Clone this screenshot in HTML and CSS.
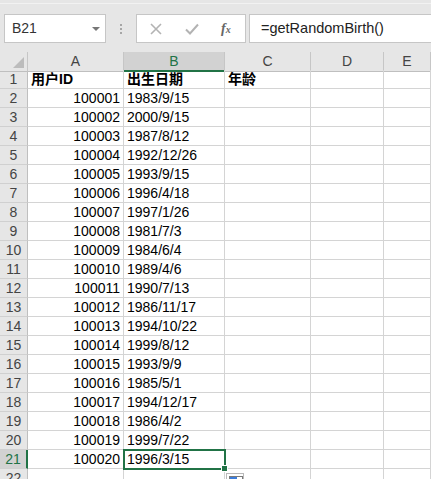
FILE: index.html
```html
<!DOCTYPE html>
<html lang="zh-CN">
<head>
    <meta charset="UTF-8">
    <meta name="viewport" content="width=device-width, initial-scale=1.0">
    <title>出生日期</title>
    <link rel="stylesheet" href="styles.css">
</head>
<body>
    <div class="toolbar">
        <div class="formula-bar">
            <div class="name-box">B21<span class="caret"></span></div>
            <div class="grip"><i></i><i></i><i></i></div>
            <div class="fn-box">
                <svg class="cancel" width="12" height="12" viewBox="0 0 12 12"><path d="M1 1L11 11M11 1L1 11" stroke="#b3b3b3" stroke-width="1.6" fill="none"/></svg>
                <svg class="enter" width="14" height="12" viewBox="0 0 14 12"><path d="M1 6.5L5 10.5L13 1.5" stroke="#b3b3b3" stroke-width="2" fill="none"/></svg>
                <span class="fx">f<small>x</small></span>
            </div>
            <div class="formula">=getRandomBirth()</div>
        </div>
    </div>

    <div class="sheet">
        <div class="row head">
            <div class="rh corner"></div>
            <div>A</div><div class="sel">B</div><div>C</div><div>D</div><div>E</div>
        </div>
        <div class="row"><div class="rh">1</div><div class="b">用户ID</div><div class="b">出生日期</div><div class="b">年龄</div><div></div><div></div></div>
        <div class="row"><div class="rh">2</div><div class="num">100001</div><div>1983/9/15</div><div></div><div></div><div></div></div>
        <div class="row"><div class="rh">3</div><div class="num">100002</div><div>2000/9/15</div><div></div><div></div><div></div></div>
        <div class="row"><div class="rh">4</div><div class="num">100003</div><div>1987/8/12</div><div></div><div></div><div></div></div>
        <div class="row"><div class="rh">5</div><div class="num">100004</div><div>1992/12/26</div><div></div><div></div><div></div></div>
        <div class="row"><div class="rh">6</div><div class="num">100005</div><div>1993/9/15</div><div></div><div></div><div></div></div>
        <div class="row"><div class="rh">7</div><div class="num">100006</div><div>1996/4/18</div><div></div><div></div><div></div></div>
        <div class="row"><div class="rh">8</div><div class="num">100007</div><div>1997/1/26</div><div></div><div></div><div></div></div>
        <div class="row"><div class="rh">9</div><div class="num">100008</div><div>1981/7/3</div><div></div><div></div><div></div></div>
        <div class="row"><div class="rh">10</div><div class="num">100009</div><div>1984/6/4</div><div></div><div></div><div></div></div>
        <div class="row"><div class="rh">11</div><div class="num">100010</div><div>1989/4/6</div><div></div><div></div><div></div></div>
        <div class="row"><div class="rh">12</div><div class="num">100011</div><div>1990/7/13</div><div></div><div></div><div></div></div>
        <div class="row"><div class="rh">13</div><div class="num">100012</div><div>1986/11/17</div><div></div><div></div><div></div></div>
        <div class="row"><div class="rh">14</div><div class="num">100013</div><div>1994/10/22</div><div></div><div></div><div></div></div>
        <div class="row"><div class="rh">15</div><div class="num">100014</div><div>1999/8/12</div><div></div><div></div><div></div></div>
        <div class="row"><div class="rh">16</div><div class="num">100015</div><div>1993/9/9</div><div></div><div></div><div></div></div>
        <div class="row"><div class="rh">17</div><div class="num">100016</div><div>1985/5/1</div><div></div><div></div><div></div></div>
        <div class="row"><div class="rh">18</div><div class="num">100017</div><div>1994/12/17</div><div></div><div></div><div></div></div>
        <div class="row"><div class="rh">19</div><div class="num">100018</div><div>1986/4/2</div><div></div><div></div><div></div></div>
        <div class="row"><div class="rh">20</div><div class="num">100019</div><div>1999/7/22</div><div></div><div></div><div></div></div>
        <div class="row"><div class="rh sel">21</div><div class="num">100020</div><div class="active">1996/3/15<span class="paste"><i></i></span></div><div></div><div></div><div></div></div>
        <div class="row"><div class="rh">22</div><div></div><div></div><div></div><div></div><div></div></div>
    </div>
</body>
</html>
```

FILE: styles.css
```css
body {
    margin: 0;
    width: 431px;
    height: 479px;
    overflow: hidden;
    background: #fff;
    font-family: 'Liberation Sans', 'Noto Sans CJK SC', sans-serif;
    font-size: 14px;
    color: #000;
}

/* formula bar */
.toolbar {
    background: #e6e6e6;
    padding-top: 3px;
}
.formula-bar {
    display: flex;
    align-items: center;
    border-top: 1px solid #f2f2f2;
    padding: 10px 0 9px 4px;
}
.formula-bar > * {
    flex-shrink: 0;
}
.name-box, .fn-box, .formula {
    box-sizing: border-box;
    height: 29px;
    background: #fff;
    border: 1px solid #c6c6c6;
}
.name-box {
    position: relative;
    width: 102px;
    padding-left: 7px;
    line-height: 27px;
    color: #333;
}
.caret {
    position: absolute;
    right: 5px;
    top: 12px;
    border-left: 4px solid transparent;
    border-right: 4px solid transparent;
    border-top: 4px solid #777;
}
.grip {
    width: 30px;
    display: flex;
    flex-direction: column;
    align-items: center;
    gap: 2px;
}
.grip i {
    width: 2px;
    height: 2px;
    background: #a6a6a6;
}
.fn-box {
    width: 110px;
    display: flex;
    align-items: center;
    padding-left: 13px;
}
.fn-box .enter { margin-left: 23px; }
.fx {
    margin-left: 22px;
    font-family: 'Liberation Serif', serif;
    font-style: italic;
    font-weight: bold;
    font-size: 14px;
    color: #666;
}
.fx small { font-size: 10px; }
.formula {
    width: 200px;
    margin-left: 3px;
    border-right: none;
    padding-left: 11px;
    line-height: 27px;
    font-size: 14.5px;
    color: #222;
}

/* grid */
.row {
    display: grid;
    grid-template-columns: 28px 96px 101px 86px 73px 1fr;
    height: 19px;
}
.row > div {
    box-sizing: border-box;
    border-right: 1px solid #d4d4d4;
    border-bottom: 1px solid #d4d4d4;
    padding: 0 3px;
    line-height: 18px;
    white-space: nowrap;
}
.row .rh {
    background: #e6e6e6;
    border-right-color: #bfbfbf;
    border-bottom-color: #d0d0d0;
    color: #444;
    text-align: center;
    padding: 0;
}
.head {
    height: 18px;
}
.head > div {
    background: #e6e6e6;
    border-right-color: #c6c6c6 !important;
    border-bottom-color: #bfbfbf !important;
    color: #444;
    text-align: center;
    line-height: 18px;
}
.corner {
    position: relative;
}
.corner::after {
    content: '';
    position: absolute;
    right: 3px;
    bottom: 3px;
    border-left: 11px solid transparent;
    border-bottom: 11px solid #bcbcbc;
}
.head .sel {
    background: #d2d2d2;
    color: #217346;
    border-bottom: 2px solid #217346 !important;
}
.row .rh.sel {
    background: #d2d2d2;
    color: #217346;
    border-right: 2px solid #217346;
}
.num { text-align: right; }
.b { font-weight: bold; }

/* selected cell with fill handle */
.row .active {
    position: relative;
    z-index: 2;
    outline: 2px solid #217346;
    outline-offset: -1px;
}
.active::after {
    content: '';
    position: absolute;
    right: -4px;
    bottom: -4px;
    width: 5px;
    height: 5px;
    background: #217346;
    border: 1px solid #fff;
}
.paste {
    position: absolute;
    left: 102px;
    top: 23px;
    width: 18px;
    height: 14px;
    box-sizing: border-box;
    background: #fff;
    border: 1px solid #b9b9b9;
    padding: 2px;
}
.paste i {
    display: block;
    width: 12px;
    height: 5px;
    border: 1px solid #7a7a7a;
    background: linear-gradient(90deg, #3c7ddb 60%, #fff 60%);
}
```
